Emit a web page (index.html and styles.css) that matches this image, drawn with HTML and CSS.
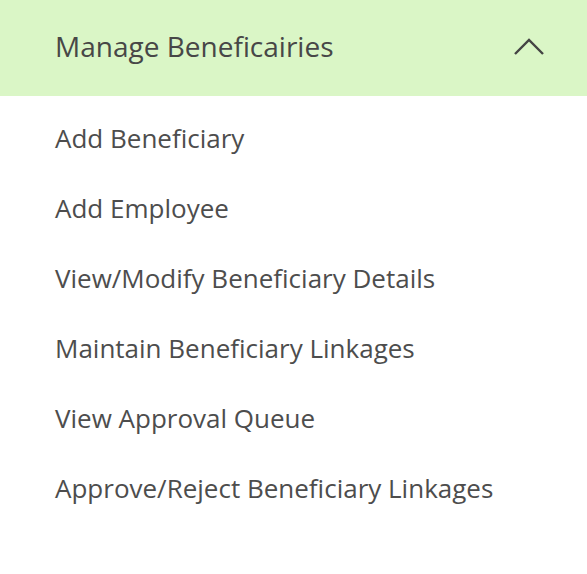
FILE: index.html
```html
<!DOCTYPE html>
<html>
<head>
<meta charset="utf-8">
<link rel="stylesheet" href="styles.css">
</head>
<body>
<div class="panel">
  <div class="header">
    <span class="title">Manage Beneficairies</span>
    <svg class="chev" width="34" height="20" viewBox="0 0 34 20"><polyline points="2,17 16,3 30,17" fill="none" stroke="#444" stroke-width="2.4"/></svg>
  </div>
  <ul class="menu">
    <li>Add Beneficiary</li>
    <li>Add Employee</li>
    <li>View/Modify Beneficiary Details</li>
    <li>Maintain Beneficiary Linkages</li>
    <li>View Approval Queue</li>
    <li>Approve/Reject Beneficiary Linkages</li>
  </ul>
</div>
</body>
</html>
```
FILE: styles.css
```css
html, body { margin: 0; padding: 0; background: #fff; }
body { font-family: "Open Sans", sans-serif; color: #4d4d4d; }
.panel { width: 587px; height: 574px; }
.header {
  height: 96px;
  background: #daf6c6;
  display: flex;
  align-items: center;
  justify-content: space-between;
  padding: 0 40px 0 55px;
}
.title { font-size: 28px; color: #474747; margin-top: -4px; }
.chev { display: block; margin-top: -3px; }
.menu { list-style: none; margin: 0; padding: 7px 0 0 55px; }
.menu li { font-size: 26px; height: 70px; line-height: 70px; }
```
